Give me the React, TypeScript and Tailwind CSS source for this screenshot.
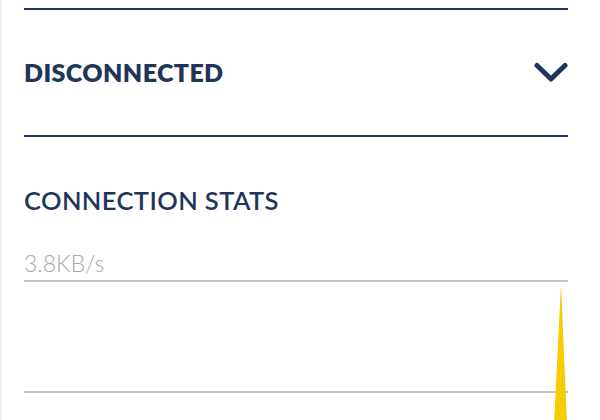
import React from "react";

const App = () => {
  return (
    <div className="w-[600px] h-[420px] overflow-hidden bg-white border-l-2 border-[#f0f0f0]" style={{ fontFamily: "Lato, 'Noto Sans', sans-serif" }}>
      <div className="pl-[22px] pr-[32px] pt-[8px]">
        <div className="h-[2px] bg-[#1f3559]" />
        <div className="flex items-center justify-between h-[125px]">
          <span className="text-[25px] font-extrabold text-[#1f3559] tracking-[0.4px] leading-none">DISCONNECTED</span>
          <svg width="34" height="21" viewBox="0 0 34 21">
            <path d="M3 3.5 L17 17 L31 3.5" fill="none" stroke="#1f3559" strokeWidth="5" strokeLinecap="round" strokeLinejoin="round" />
          </svg>
        </div>
        <div className="h-[2px] bg-[#1f3559]" />
        <div className="pt-[51px] text-[25.5px] font-semibold text-[#1f3559] leading-none tracking-[0.4px]">CONNECTION STATS</div>
        <div className="relative mt-[38px]">
          <div className="text-[23px] font-light text-[#a9a9a9] leading-none pb-[5px]">3.8KB/s</div>
          <div className="h-[2px] bg-[#c4c4c4]" />
          <div className="h-[109px]" />
          <div className="h-[2px] bg-[#c4c4c4]" />
          <svg width="20" height="140" viewBox="0 0 20 140" className="absolute right-[-5px] top-[32px]">
            <path d="M8 0 L14 140 L1 140 Z" fill="#f7cc05" />
          </svg>
        </div>
      </div>
    </div>
  );
};

export default App;
